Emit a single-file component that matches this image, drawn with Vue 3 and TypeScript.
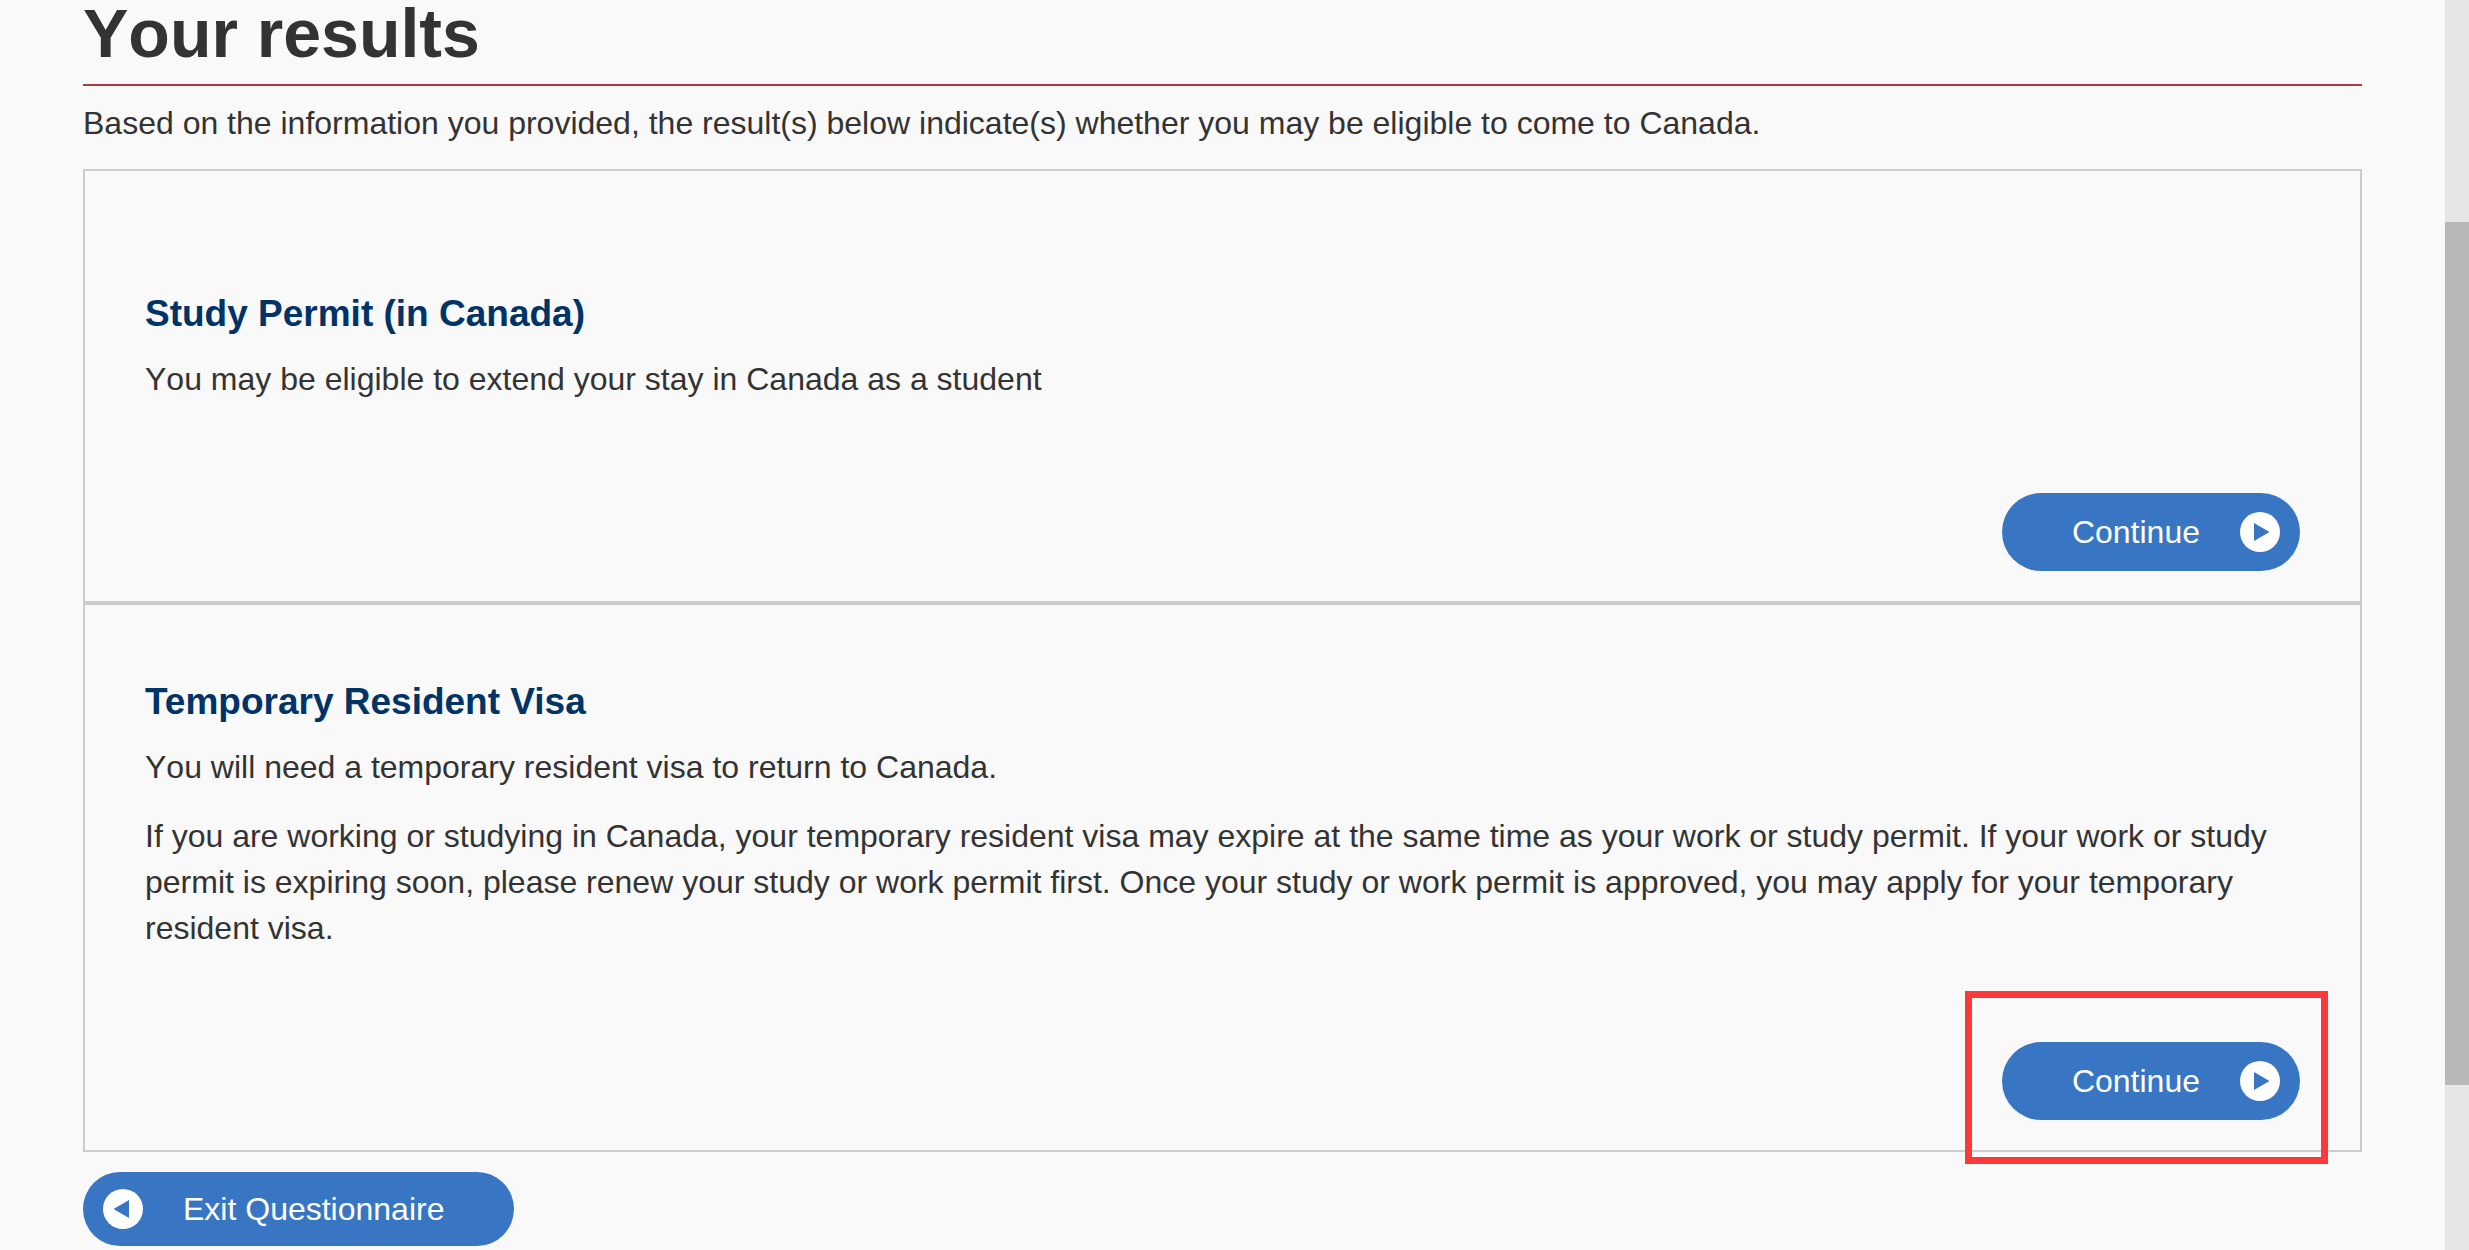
<script setup lang="ts">
interface Result {
  id: string
  title: string
  paragraphs: string[]
  leadingSpace?: boolean
  highlighted?: boolean
}

const results: Result[] = [
  {
    id: 'study-permit',
    title: 'Study Permit (in Canada)',
    paragraphs: ['You may be eligible to extend your stay in Canada as a student'],
    leadingSpace: true,
  },
  {
    id: 'resident-visa',
    title: 'Temporary Resident Visa',
    paragraphs: [
      'You will need a temporary resident visa to return to Canada.',
      'If you are working or studying in Canada, your temporary resident visa may expire at the same time as your work or study permit. If your work or study permit is expiring soon, please renew your study or work permit first. Once your study or work permit is approved, you may apply for your temporary resident visa.',
    ],
    highlighted: true,
  },
]
</script>

<template>
  <div class="page">
    <main class="content">
      <h1>Your results</h1>
      <p class="intro">
        Based on the information you provided, the result(s) below indicate(s) whether you may be eligible to come to Canada.
      </p>
      <div class="results">
        <section
          v-for="result in results"
          :key="result.id"
          class="result"
          :class="{ spaced: result.leadingSpace }"
          :aria-labelledby="result.id"
        >
          <h2 :id="result.id">{{ result.title }}</h2>
          <p v-for="text in result.paragraphs" :key="text">{{ text }}</p>
          <div class="actions">
            <div class="action">
              <button type="button" class="pill">
                <span>Continue</span>
                <svg class="icon" viewBox="0 0 40 40" aria-hidden="true">
                  <circle cx="20" cy="20" r="20" fill="#fff" />
                  <path d="M14 11 29.5 20 14 29Z" fill="#3876c4" />
                </svg>
              </button>
              <div v-if="result.highlighted" class="highlight"></div>
            </div>
          </div>
        </section>
      </div>
      <button type="button" class="pill exit">
        <svg class="icon" viewBox="0 0 40 40" aria-hidden="true">
          <circle cx="20" cy="20" r="20" fill="#fff" />
          <path d="M26 11 10.5 20 26 29Z" fill="#3876c4" />
        </svg>
        <span>Exit Questionnaire</span>
      </button>
    </main>
    <div class="scrollbar" aria-hidden="true">
      <div class="thumb"></div>
    </div>
  </div>
</template>

<style>
body {
  margin: 0;
  background: #f9f9f9;
}
</style>

<style scoped>
.page {
  display: flex;
  min-height: 100vh;
  background: #f9f9f9;
  color: #333;
  font-family: "Liberation Sans", Arial, sans-serif;
  font-size: 32px;
  font-kerning: none;
  line-height: 46px;
}

.content {
  flex: 1;
  min-width: 0;
  box-sizing: border-box;
  padding: 3px 83px 0;
}

h1 {
  margin: 0;
  padding-bottom: 21px;
  border-bottom: 2px solid #af3c43;
  font-size: 68px;
  line-height: 60px;
}

p {
  margin: 0;
}

.intro {
  margin: 14px 0 23px;
}

.results {
  border: 2px solid #ccc;
}

.result {
  padding: 74px 60px 30px;
}

.result.spaced {
  padding-top: 120px;
}

.result + .result {
  border-top: 4px solid #ccc;
}

h2 {
  margin: 0 0 19px;
  color: #036;
  font-size: 37px;
  font-kerning: normal;
  line-height: 46px;
}

p + p {
  margin-top: 23px;
}

.actions {
  display: flex;
  justify-content: flex-end;
  margin-top: 91px;
}

.action {
  position: relative;
}

.pill {
  display: flex;
  align-items: center;
  gap: 40px;
  height: 78px;
  padding: 0 20px 0 70px;
  border: 0;
  border-radius: 39px;
  background: #3876c4;
  color: #fff;
  font: inherit;
  cursor: pointer;
}

.exit {
  height: 74px;
  margin-top: 20px;
  padding: 0 70px 0 20px;
}

.icon {
  width: 40px;
  height: 40px;
}

.highlight {
  position: absolute;
  inset: -51px -28px -44px -37px;
  border: 7px solid #fd3838;
  pointer-events: none;
}

.scrollbar {
  display: flex;
  flex-direction: column;
  width: 24px;
  background: #e6e6e6;
}

.scrollbar::before {
  content: "";
  flex: 222;
}

.scrollbar::after {
  content: "";
  flex: 165;
}

.thumb {
  flex: 863;
  background: #b8b8b8;
}
</style>
